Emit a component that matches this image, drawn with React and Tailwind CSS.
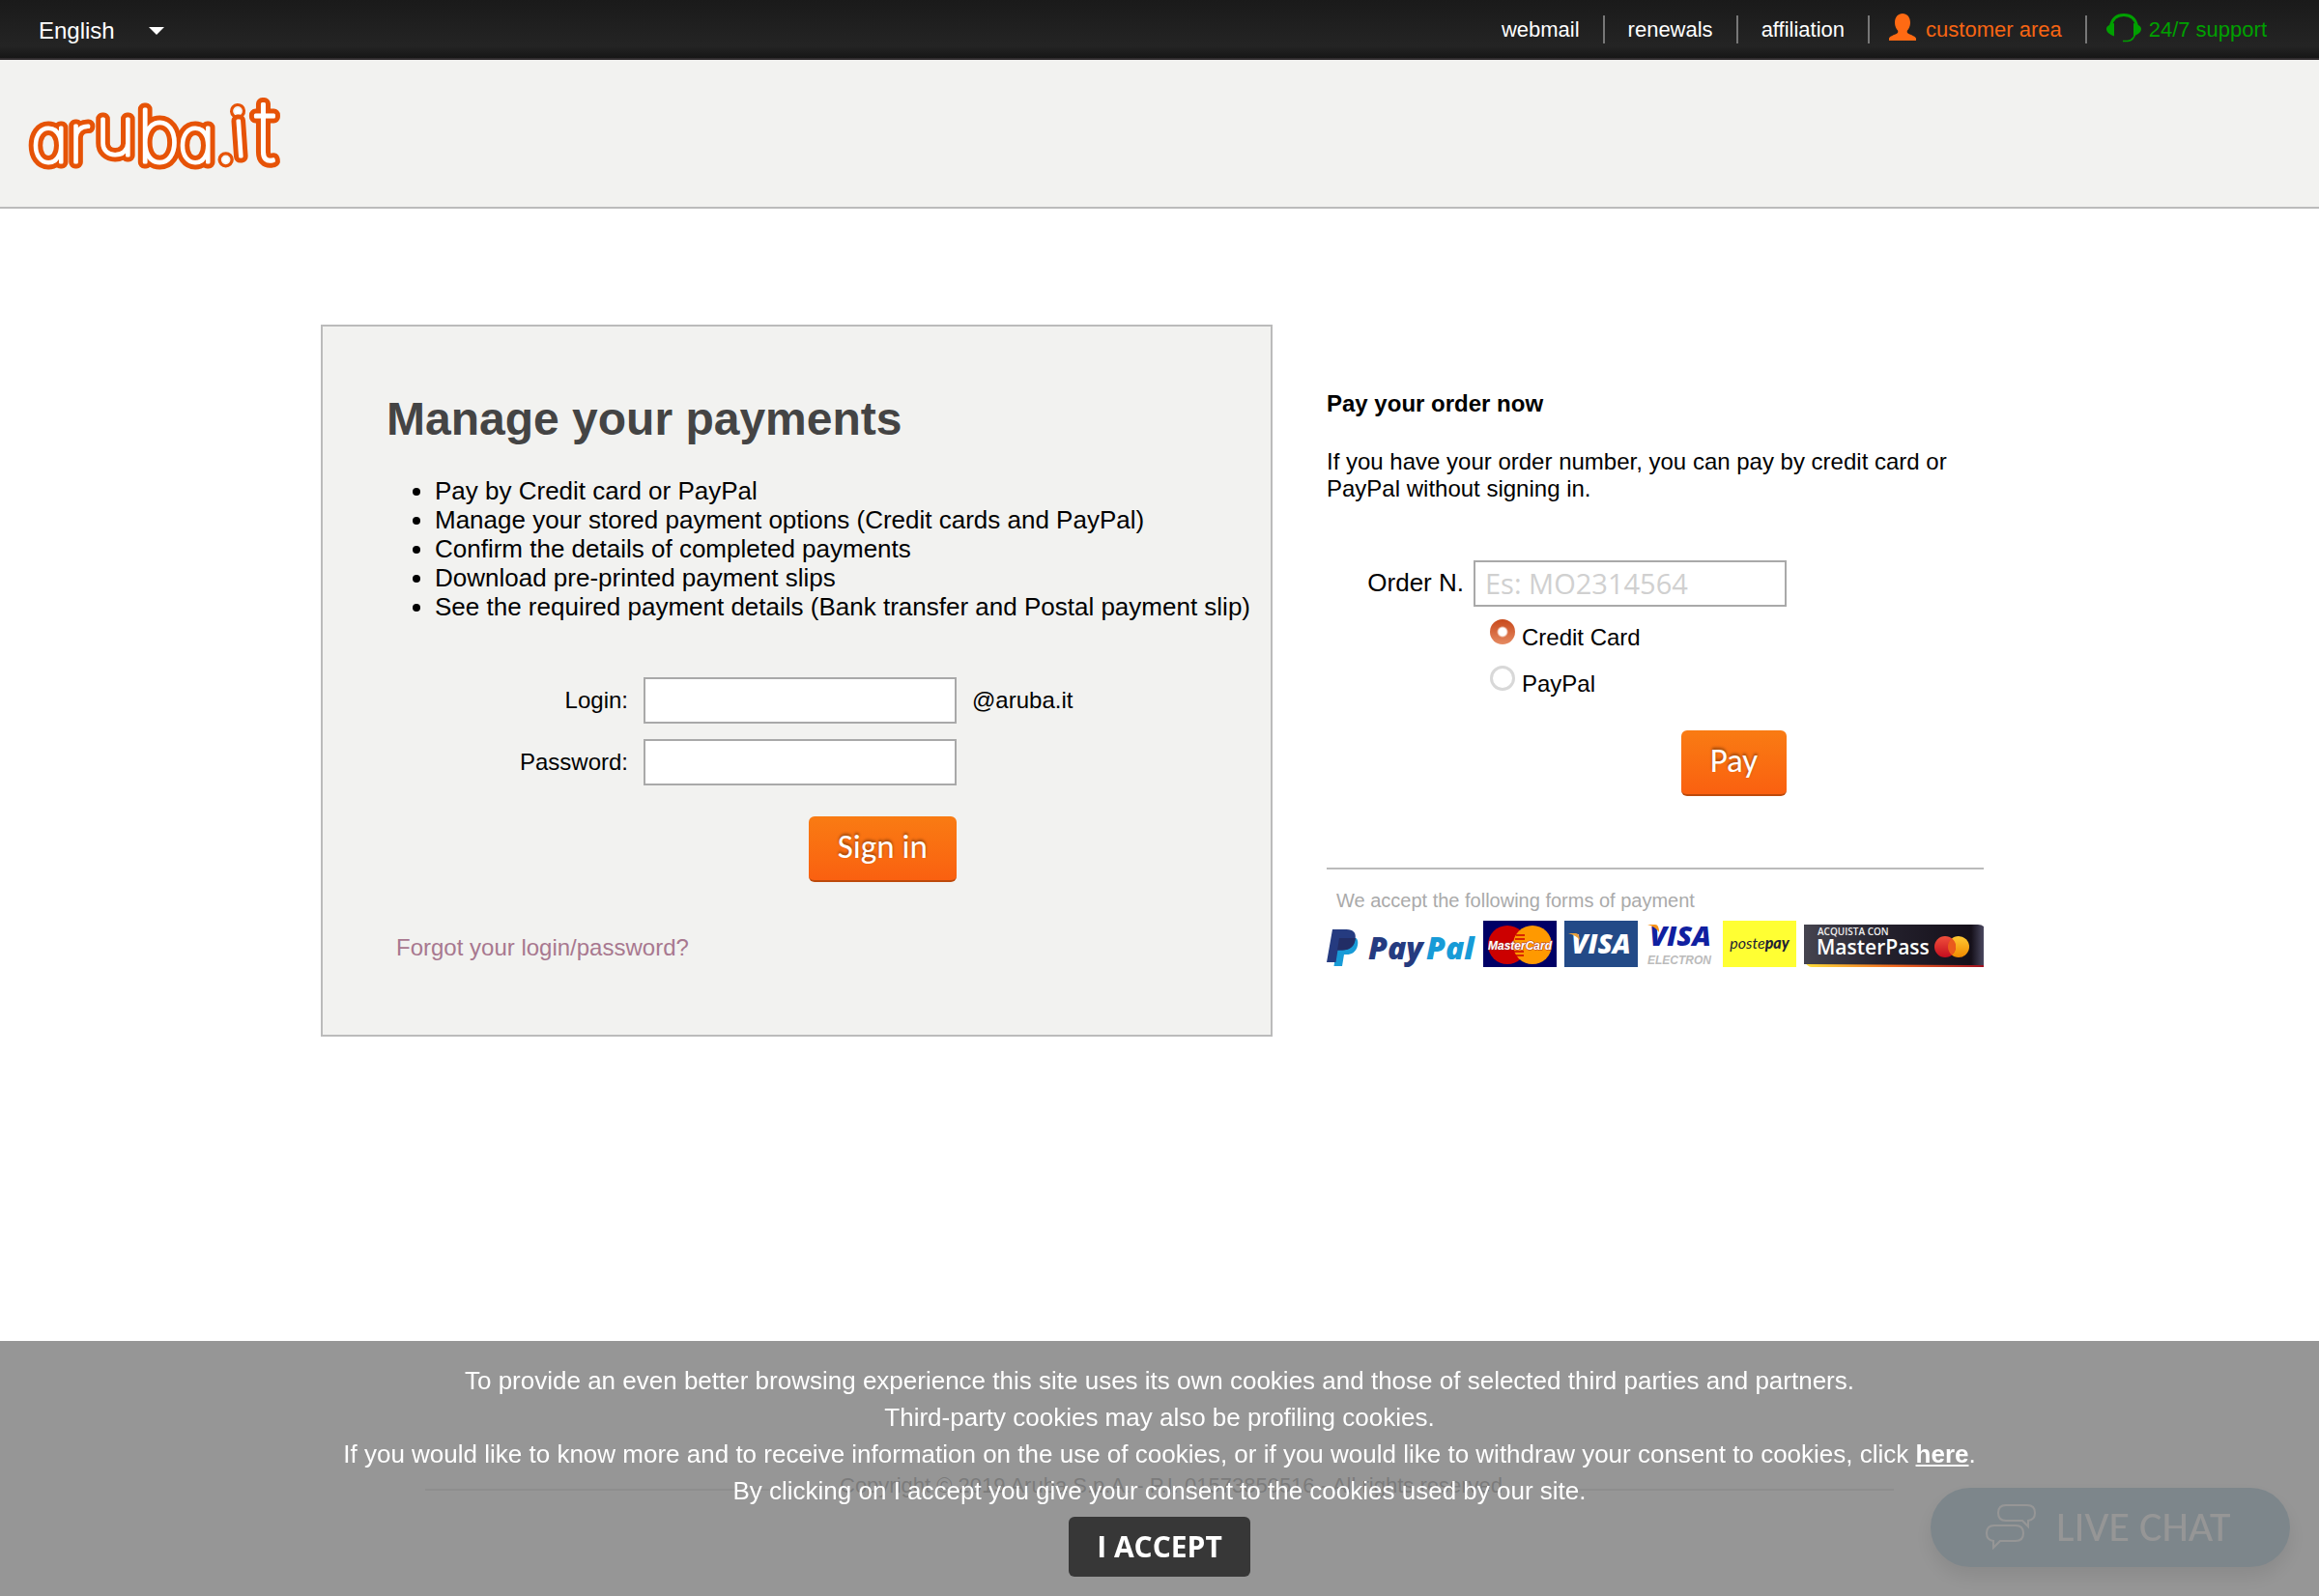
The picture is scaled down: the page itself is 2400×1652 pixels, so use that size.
import React from "react";

const SANS = "font-['Liberation_Sans',Arial,sans-serif]";

function ArubaLogo() {
  const letters = (
    <>
      <text x="32" y="170" fontSize="66">a</text>
      <text x="71" y="170" fontSize="70">r</text>
      <text x="99" y="163" fontSize="70">u</text>
      <text x="142" y="170" fontSize="76">b</text>
      <text x="184" y="170" fontSize="66">a</text>
      <text x="225" y="169" fontSize="64">.</text>
      <text x="242" y="164" fontSize="68" transform="rotate(-4 250 164)">i</text>
      <text x="264" y="169" fontSize="88">t</text>
    </>
  );
  return (
    <svg
      viewBox="24 96 280 88"
      className="h-[88px] w-[280px] overflow-visible font-['Inter',sans-serif] font-thin"
      style={{ fontFeatureSettings: '"cv11"' }}
      strokeLinejoin="round"
      strokeLinecap="round"
      role="img"
      aria-label="aruba.it"
    >
      <g fill="#e65307" stroke="#e65307" strokeWidth="13">{letters}</g>
      <g fill="#fff" stroke="#fff" strokeWidth="3">{letters}</g>
    </svg>
  );
}

function UserIcon() {
  return (
    <svg viewBox="0 0 28 28" className="h-7 w-7" fill="#ff6a13" aria-hidden="true">
      <path d="M14 0c4.600 0 8 3.600 8 9.500 0 3.700-1.500 6.500-3.200 8.300-.4 1.900.3 2.700 2 3.400C24.500 22.700 28 24 28 26v2H0v-2c0-2 3.500-3.300 7.200-4.800 1.700-.7 2.400-1.500 2-3.400C7.500 16 6 13.200 6 9.500 6 3.600 9.400 0 14 0z" />
    </svg>
  );
}

function HeadsetIcon() {
  return (
    <svg viewBox="0 0 36 30" className="h-[30px] w-9" fill="none" stroke="#00a000" aria-hidden="true">
      <path d="M4.500 13C6 5.500 11 1.500 18 1.500S30 5.500 31.500 13" strokeWidth="3" />
      <path d="M8 10v13.500C3 21.500 0 19 0 16s3-4.500 8-6zM28 10v13.500c5-2 8-4.500 8-7.500s-3-4.500-8-6z" fill="#00a000" stroke="none" />
      <path d="M30 20c-1 5-4 8-8 8.500h-5" strokeWidth="1.500" />
    </svg>
  );
}

function TopBar() {
  const links = ["webmail", "renewals", "affiliation"];
  return (
    <div className="flex h-[62px] items-start justify-between border-b-2 border-[#302c2e] bg-linear-to-b from-[#1a1a1a] via-[#242424] via-80% to-[#161616] pr-[54px] pl-10">
      <div className="relative flex pt-[18px] text-white">
        <select aria-label="Language" className="w-[130px] appearance-none bg-transparent text-[24px] leading-7 text-white">
          <option>English</option>
          <option>Italiano</option>
        </select>
        <svg viewBox="0 0 16 8" className="pointer-events-none absolute top-7 right-0 h-2 w-4" fill="#fff" aria-hidden="true">
          <path d="M0 0h16L8 8z" />
        </svg>
      </div>
      <nav className="flex pt-4 text-[22px] leading-7 text-white">
        {links.map((l, i) => (
          <a key={l} href="#" className={i ? "flex border-l-2 border-[#777] px-6" : "flex pr-6"}>
            <span className="pt-px">{l}</span>
          </a>
        ))}
        <a href="#" className="flex border-l-2 border-[#777] pr-6 pl-5 text-[#f76513]">
          <span className="-mt-0.5 mr-2.5 h-7"><UserIcon /></span>
          <span className="pt-px">customer area</span>
        </a>
        <a href="#" className="flex border-l-2 border-[#777] pl-5 text-[#00a000]">
          <span className="-mt-0.5 mr-2 h-7"><HeadsetIcon /></span>
          <span className="pt-px">24/7 support</span>
        </a>
      </nav>
    </div>
  );
}

const inputClass =
  "h-12 w-[324px] border-2 border-[#a9a9a9] bg-white px-2.5 pb-0.5 font-['Open_Sans',sans-serif] text-[29px] placeholder:text-[#d0d0d0]";
const buttonClass =
  "h-[68px] rounded-md border-b-2 border-[#bd4a0c] bg-linear-to-b from-[#f97b13] to-[#fa6010] px-[30px] pb-1 font-['Carlito','Lato',sans-serif] text-[35px] leading-10 text-white text-shadow-[0_-2px_3px_rgba(0,0,0,0.4)]";

function LoginPanel() {
  const items = [
    "Pay by Credit card or PayPal",
    "Manage your stored payment options (Credit cards and PayPal)",
    "Confirm the details of completed payments",
    "Download pre-printed payment slips",
    "See the required payment details (Bank transfer and Postal payment slip)",
  ];
  return (
    <section className="w-[985px] border-2 border-[#bbb] bg-[#f2f2f0] px-[66px] pt-[68px] pb-[76px] whitespace-nowrap">
      <h1 className="text-[48px] leading-14 font-bold text-[#444]">Manage your payments</h1>
      <ul className="mt-[31px] list-disc pl-[50px] text-[26px] leading-[30px]">
        {items.map((t) => (
          <li key={t}>{t}</li>
        ))}
      </ul>
      <form className="mt-[58px] text-[24px] leading-7" onSubmit={(e) => e.preventDefault()}>
        <div className="grid grid-cols-[250px_324px_1fr] items-center gap-x-4 gap-y-4">
          <label htmlFor="login" className="text-right">Login:</label>
          <input id="login" type="text" className={inputClass} />
          <span>@aruba.it</span>
          <label htmlFor="password" className="text-right">Password:</label>
          <input id="password" type="password" className={inputClass} />
          <span />
          <button type="submit" className={`col-start-2 mt-4 justify-self-end ${buttonClass}`}>
            Sign in
          </button>
        </div>
        <a href="#" className="mt-[54px] ml-2.5 inline-block text-[#a8788f]">Forgot your login/password?</a>
      </form>
    </section>
  );
}

function PayPalLogo() {
  return (
    <svg viewBox="0 0 154 48" className="h-12 w-[154px]" role="img" aria-label="PayPal">
      <path d="M12 18h18.500c2.500 2.500 2 6.500 1 9.500-1.800 5-5.500 7.500-11 7.500h-2.500l-2 12H7.500z" fill="#179bd7" />
      <path d="M6 9h14.500c7 0 10.500 3.500 9 10.500C28 27 23 30.500 16 30.500h-4.500L9.500 43H0z" fill="#253b80" />
      <path d="M13 18h16.700c0 8-5.500 12.500-13.700 12.500h-5z" fill="#222d65" />
      <text y="40" className="font-['Open_Sans',sans-serif] text-[32px] font-extrabold italic">
        <tspan x="43" fill="#253b80">Pay</tspan>
        <tspan x="103" fill="#179bd7">Pal</tspan>
      </text>
    </svg>
  );
}

function MasterCardLogo() {
  return (
    <svg viewBox="0 0 76 48" className="h-12 w-[76px]" role="img" aria-label="MasterCard">
      <path d="M0 0h76v48H0z" fill="#000066" />
      <circle cx="25" cy="25" r="20" fill="#c00" />
      <circle cx="51" cy="25" r="20" fill="#f90" />
      <path d="M34 15h9M33 19h10M32 32h10M33 36h9" stroke="#c00" strokeWidth="1.500" />
      <text x="38" y="30" textAnchor="middle" fill="#fff" stroke="#a33" strokeWidth="1" paintOrder="stroke" className="font-['Liberation_Sans',sans-serif] text-[12px] font-bold italic">MasterCard</text>
    </svg>
  );
}

function VisaLogo() {
  return (
    <svg viewBox="0 0 76 48" className="h-12 w-[76px]" role="img" aria-label="Visa">
      <path d="M0 0h76v48H0z" fill="#234a87" />
      <text x="38" y="34" textAnchor="middle" fill="#fff" className="font-['Open_Sans',sans-serif] text-[28px] font-extrabold italic">VISA</text>
      <path d="M4 13h8q3 0 4 7-4-5-12-7z" fill="#e9a13b" />
    </svg>
  );
}

function VisaElectronLogo() {
  return (
    <svg viewBox="0 0 72 48" className="h-12 w-[72px] overflow-visible" role="img" aria-label="Visa Electron">
      <text x="36" y="26" textAnchor="middle" fill="#1020a0" className="font-['Open_Sans',sans-serif] text-[29px] font-extrabold italic">VISA</text>
      <path d="M2 4h8q4 0 4 8-4-6-12-8z" fill="#f7941d" />
      <text x="35" y="45" textAnchor="middle" fill="#bbb" className="font-['Liberation_Sans',sans-serif] text-[12px] font-bold italic">ELECTRON</text>
    </svg>
  );
}

function PostepayLogo() {
  return (
    <svg viewBox="0 0 76 48" className="h-12 w-[76px]" role="img" aria-label="postepay">
      <path d="M0 0h76v48H0z" fill="#ff3" />
      <text x="38" y="29" textAnchor="middle" fill="#223" className="font-['Lato',sans-serif] text-[16px] italic">
        poste<tspan className="font-black">pay</tspan>
      </text>
    </svg>
  );
}

function MasterPassLogo() {
  return (
    <svg viewBox="0 0 186 48" className="h-12 w-[186px]" role="img" aria-label="MasterPass">
      <defs>
        <linearGradient id="mp-body">
          <stop offset="0" stopColor="#45444f" />
          <stop offset=".45" stopColor="#24212d" />
          <stop offset=".93" stopColor="#15101a" />
          <stop offset="1" stopColor="#4a4860" />
        </linearGradient>
        <linearGradient id="mp-edge">
          <stop offset="0" stopColor="#ffe13c" />
          <stop offset=".5" stopColor="#f26a21" />
          <stop offset="1" stopColor="#a01020" />
        </linearGradient>
        <linearGradient id="mp-red" x2="0" y2="1">
          <stop stopColor="#f0503c" />
          <stop offset="1" stopColor="#c40d1e" />
        </linearGradient>
        <linearGradient id="mp-gold" x2="0" y2="1">
          <stop stopColor="#ffc933" />
          <stop offset="1" stopColor="#f08a00" />
        </linearGradient>
      </defs>
      <path d="M0 42h186v6H8q-4 0-8-6z" fill="url(#mp-edge)" />
      <path d="M0 4h180q4 0 6 2v40L0 45z" fill="url(#mp-body)" />
      <text x="14" y="15" fill="#eee" className="font-['Open_Sans',sans-serif] text-[10px] font-semibold">ACQUISTA CON</text>
      <text x="13" y="35" fill="#fff" className="font-['Open_Sans',sans-serif] text-[21px] font-semibold">MasterPass</text>
      <circle cx="160" cy="27" r="11" fill="url(#mp-gold)" />
      <circle cx="146" cy="27" r="11" fill="url(#mp-red)" />
      <path d="M153 18.500a11 11 0 0 1 0 17 11 11 0 0 1 0-17z" fill="#ea5b1c" />
    </svg>
  );
}

const radioClass =
  "mt-0.5 size-[26px] appearance-none rounded-full border-[3px] border-[#d8d8d8] bg-white checked:border-0 checked:bg-[radial-gradient(circle,#fff_0_4px,transparent_6px),linear-gradient(#c8481a,#e58a62)]";

function PayOrder() {
  return (
    <section className="flex w-[680px] flex-col pt-[68px] text-[24px] leading-7">
      <h2 className="font-bold">Pay your order now</h2>
      <p className="mt-8">If you have your order number, you can pay by credit card or PayPal without signing in.</p>
      <form className="mt-[60px] grid grid-cols-[142px_324px] gap-x-2.5" onSubmit={(e) => e.preventDefault()}>
        <label htmlFor="order" className="self-center pb-0.5 text-right text-[26px]">Order N.</label>
        <input id="order" type="text" placeholder="Es: MO2314564" className={inputClass} />
        <div className="col-start-2 mt-[11px] flex flex-col gap-4 pl-[17px]">
          <label className="flex h-8 items-start gap-[7px]">
            <input type="radio" name="method" defaultChecked className={radioClass} />
            <span className="pt-[7px]">Credit Card</span>
          </label>
          <label className="flex h-8 items-start gap-[7px]">
            <input type="radio" name="method" className={radioClass} />
            <span className="pt-[7px]">PayPal</span>
          </label>
        </div>
        <button type="submit" className={`col-start-2 mt-[37px] justify-self-end ${buttonClass}`}>
          Pay
        </button>
      </form>
      <div className="mt-[74px] border-t-2 border-[#bbb] pt-5">
        <p className="pl-2.5 text-[20px] leading-6 text-[#aaa]">We accept the following forms of payment</p>
        <div className="mt-[9px] flex gap-2">
          <PayPalLogo />
          <MasterCardLogo />
          <VisaLogo />
          <VisaElectronLogo />
          <PostepayLogo />
          <MasterPassLogo />
        </div>
      </div>
    </section>
  );
}

function LiveChat() {
  return (
    <button type="button" className="fixed right-[30px] bottom-[30px] flex h-[82px] w-[372px] items-center rounded-full bg-[#327da6] pb-0.5 pl-14 font-['Carlito','Lato',sans-serif] text-[44px] text-white shadow-[0_10px_20px_rgba(0,0,0,0.4)]">
      <svg viewBox="0 0 54 48" className="mr-5 h-12 w-[54px]" fill="none" stroke="#fff" strokeWidth="2" aria-hidden="true">
        <path d="M22 2h22c5 0 8 3 8 8s-3 7.500-7 8v6l-6-6H22c-5 0-8-3-8-8s3-8 8-8z" />
        <path d="M10 23h22c5 0 8 3 8 8s-3 8-8 8H16l-7 7v-7c-4-.5-7-3-7-8s3-8 8-8z" />
      </svg>
      LIVE CHAT
    </button>
  );
}

function CookieBanner() {
  return (
    <div role="dialog" aria-label="Cookies" className="fixed inset-x-0 bottom-0 bg-[rgba(135,135,135,0.88)] pt-[22px] pb-5 text-center text-[26px] leading-[38px] text-white">
      <p>To provide an even better browsing experience this site uses its own cookies and those of selected third parties and partners.</p>
      <p>Third-party cookies may also be profiling cookies.</p>
      <p>
        If you would like to know more and to receive information on the use of cookies, or if you would like to withdraw your consent to cookies, click{" "}
        <a href="#" className="font-bold underline">here</a>.
      </p>
      <p>By clicking on I accept you give your consent to the cookies used by our site.</p>
      <button type="button" className="mx-auto mt-2 block h-[62px] w-[188px] rounded-md bg-[#373737] font-['Open_Sans',sans-serif] text-[30px] font-bold">
        I ACCEPT
      </button>
    </div>
  );
}

export default function App() {
  return (
    <div className={`flex min-h-screen flex-col bg-white text-black ${SANS}`}>
      <TopBar />
      <header className="border-b-2 border-[#bbb] bg-[#f2f2f0] px-6 py-8">
        <ArubaLogo />
      </header>
      <main className="mx-auto mt-[120px] flex w-full max-w-[1736px] items-start gap-14">
        <LoginPanel />
        <PayOrder />
      </main>
      <footer className="mx-auto mt-auto flex w-full max-w-[1520px] items-center pb-[102px] text-[22px] leading-6 text-[#222]">
        <span className="mt-2 h-0.5 flex-1 bg-[#bbb]" />
        <span className="pr-[48px] pl-[72px]">Copyright © 2019 Aruba S.p.A. - P.I. 01573850516 - All rights reserved</span>
        <span className="mt-2 h-0.5 flex-1 bg-[#bbb]" />
      </footer>
      <LiveChat />
      <CookieBanner />
    </div>
  );
}
